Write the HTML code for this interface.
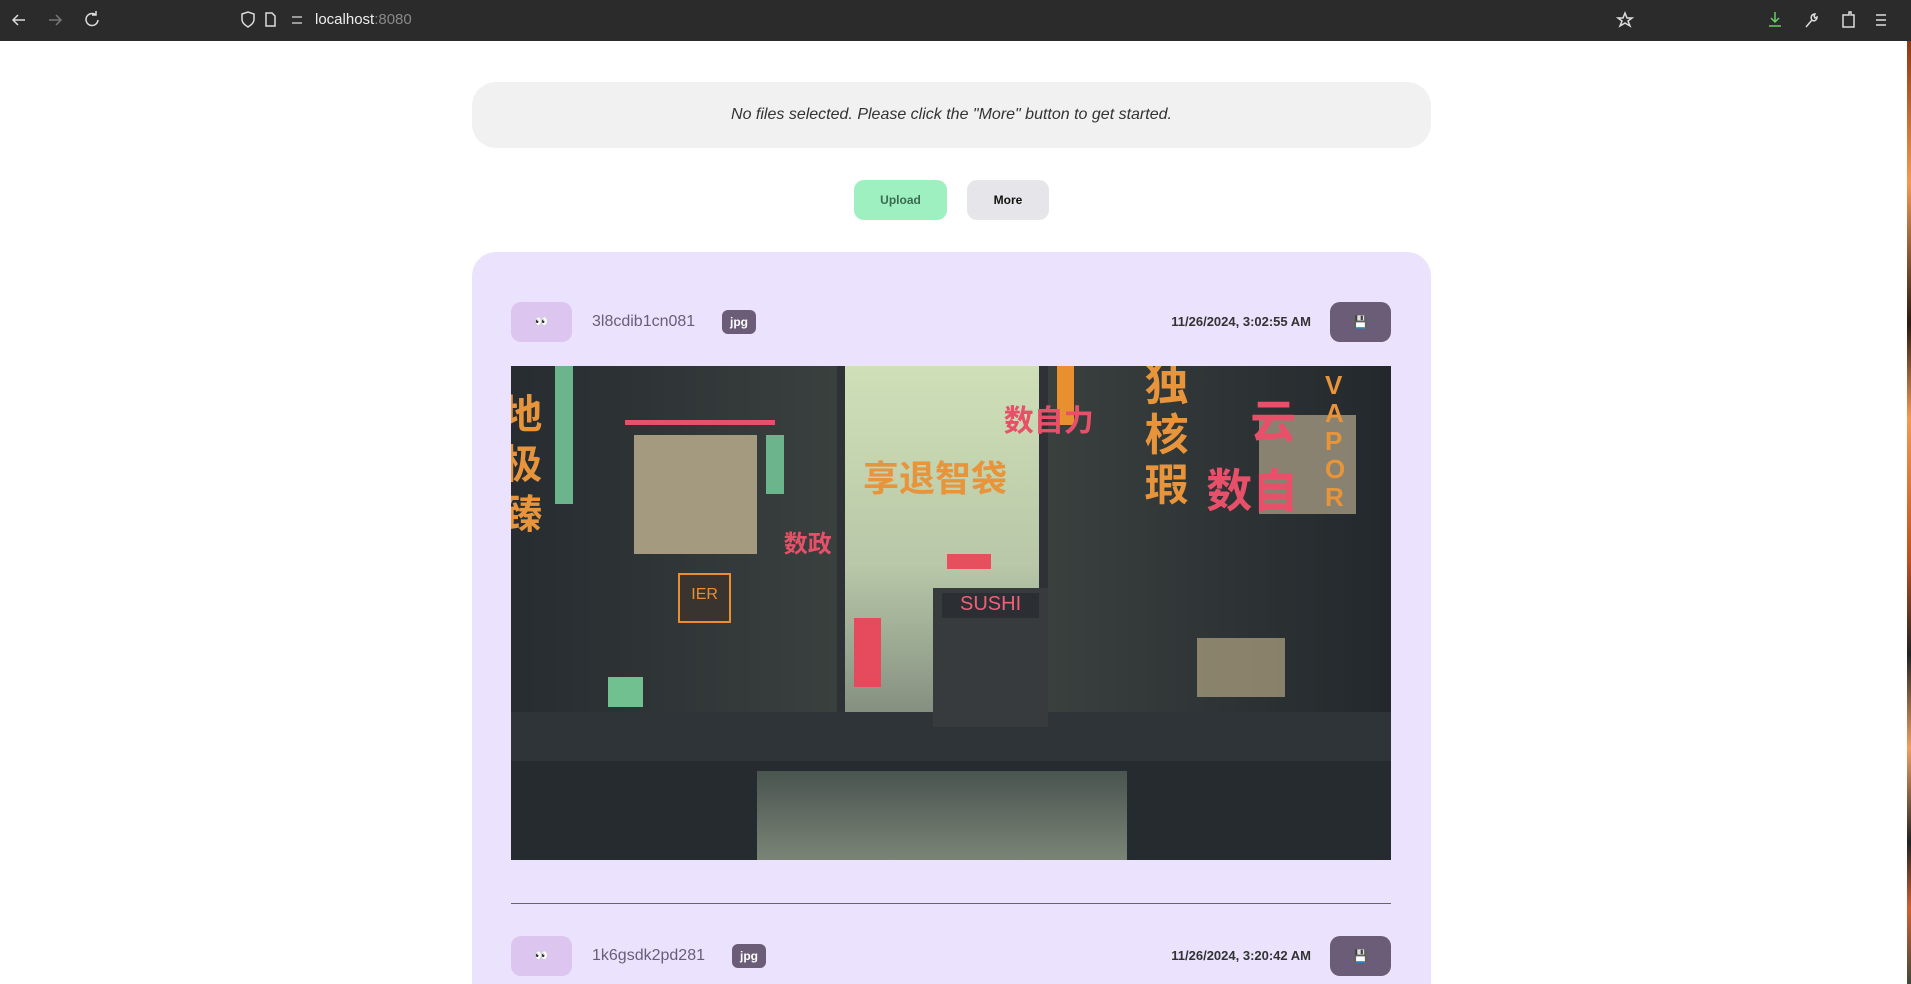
<!DOCTYPE html>
<html><head><meta charset="utf-8"><style>
*{box-sizing:border-box;margin:0;padding:0}
html,body{width:1911px;height:984px;overflow:hidden}
body{background:#fff;font-family:"Liberation Sans","Noto Sans CJK SC",sans-serif;position:relative}
.bar{position:absolute;left:0;top:0;width:1911px;height:41px;background:#2b2b2b;color:#ccc}
.strip{position:absolute;right:0;top:41px;width:4px;height:943px;background:linear-gradient(#8a3a10,#f39a55 15%,#2a1a10 30%,#f39a55 40%,#c05020 55%,#222 65%,#f0a060 75%,#222 85%,#d06030 92%,#404838)}
.info{position:absolute;left:472px;top:82px;width:959px;height:66px;border-radius:24px;background:#f1f1f1;text-align:center;line-height:66px;font-style:italic;font-size:16px;color:#333}
.btn{position:absolute;top:180px;height:40px;border-radius:10px;font-size:12px;font-weight:bold;text-align:center;line-height:40px}
.card{position:absolute;left:472px;top:252px;width:959px;height:732px;border-radius:24px 24px 0 0;background:#ebe3fe}
.eye{position:absolute;left:39px;width:61px;height:40px;border-radius:10px;background:#dcc5ee;text-align:center;line-height:40px;font-size:11px;color:#333}
.name{position:absolute;left:120px;font-size:16px;color:#6b5c78;line-height:40px}
.badge{position:absolute;height:24px;width:34px;border-radius:6px;background:#6b5c78;color:#fff;font-size:12px;font-weight:bold;text-align:center;line-height:24px}
.date{position:absolute;right:120px;font-size:13px;font-weight:bold;color:#333;line-height:40px}
.save{position:absolute;left:858px;width:61px;height:40px;border-radius:10px;background:#6b5c78;text-align:center;line-height:40px;font-size:12px}
.img{position:absolute;left:39px;top:114px;width:880px;height:494px;overflow:hidden;background:#2e3236}
.img div{position:absolute}
.cj{position:absolute;font-weight:bold;font-family:"Noto Sans CJK SC",sans-serif}
</style></head><body>
<div class="bar">
<svg width="1911" height="41" style="position:absolute;left:0;top:0" fill="none" stroke="#ddd" stroke-width="1.5">
<path d="M25 20H13M18 15l-5 5 5 5"/><path d="M49 20h12M56 15l5 5-5 5" stroke="#777"/>
<path d="M96 15a6 6 0 1 0 2 5M96 11v4h-4"/>
<path d="M242 14l6-2 6 2v5c0 4-3 6-6 8-3-2-6-4-6-8z"/><path d="M266 13h6l3 3v10h-9z"/>
<path d="M292 17h10M292 23h10" stroke-width="1.2"/>
<path d="M1625 13l2 5h5l-4 3 2 5-5-3-5 3 2-5-4-3h5z"/>
<path d="M1775 12v10M1771 18l4 4 4-4M1769 26h12" stroke="#6c6"/>
<path d="M1806 27l6-7M1812 20c2 2 5 0 5-3l-2 1-1-2 1-2c-3 0-5 3-3 6"/>
<path d="M1843 15h6v-3h2v3h3v12h-11z"/>
<path d="M1876 15h10M1876 20h10M1876 25h10"/>
</svg>
<div style="position:absolute;left:315px;top:11px;font-size:15px;color:#eee">localhost<span style="color:#888">:8080</span></div>
</div>
<div class="strip"></div>
<div class="info">No files selected. Please click the "More" button to get started.</div>
<div class="btn" style="left:854px;width:93px;background:#9ef0c0;color:#3a6a50">Upload</div>
<div class="btn" style="left:967px;width:82px;background:#e6e6ea;color:#111">More</div>
<div class="card">
<div style="position:absolute;left:0;top:50px;width:959px;height:40px">
<div class="eye">👀</div><div class="name">3l8cdib1cn081</div>
<div class="badge" style="left:250px;top:8px">jpg</div>
<div class="date">11/26/2024, 3:02:55 AM</div><div class="save">💾</div></div>
<div class="img">
<div style="left:38%;top:0;width:22%;height:100%;background:linear-gradient(#cfe0b8,#b8c8a8 40%,#8e9a88 65%,#4a504c)"></div>
<div style="left:0;top:0;width:37%;height:100%;background:linear-gradient(90deg,#262c30,#3a403e)"></div>
<div style="left:61%;top:0;width:39%;height:100%;background:linear-gradient(90deg,#3a403e,#23282d)"></div>
<div style="left:14%;top:14%;width:14%;height:24%;background:#a39a80"></div>
<div style="left:13%;top:11%;width:17%;height:1%;background:#e8506a"></div>
<div style="left:0;top:70%;width:100%;height:10%;background:#2e3438"></div>
<div style="left:0;top:80%;width:100%;height:20%;background:#262b2f"></div>
<div style="left:28%;top:82%;width:42%;height:18%;background:linear-gradient(#4a5450,#7a8476)"></div>
<div style="left:39%;top:51%;width:3%;height:14%;background:#e64b5d"></div>
<div style="left:48%;top:45%;width:13%;height:28%;background:#383b3e"></div>
<div style="left:49%;top:46%;width:11%;height:5%;background:#2b2e32;color:#f0607a;font-size:20px;text-align:center">SUSHI</div>
<div style="left:49.5%;top:38%;width:5%;height:3%;background:#e6505e"></div>
<div style="left:11%;top:63%;width:4%;height:6%;background:#70c090"></div>
<div style="left:5%;top:0;width:2%;height:28%;background:#6cb48c"></div>
<div style="left:29%;top:14%;width:2%;height:12%;background:#6cb48c"></div>
<div style="left:78%;top:55%;width:10%;height:12%;background:#c8b890;opacity:.6"></div>
<div style="left:85%;top:10%;width:11%;height:20%;background:#8a8270"></div>
<div style="left:62%;top:0;width:2%;height:12%;background:#e89030"></div>
<div style="left:19%;top:42%;width:6%;height:10%;border:2px solid #e89030;background:#3a3430;color:#e89030;font-size:16px;line-height:40px;text-align:center">IER</div>
<div class="cj" style="left:56%;top:6%;font-size:30px;color:#e8506a">数自力</div>
<div class="cj" style="left:40%;top:17%;font-size:36px;color:#e8943a">享退智袋</div>
<div class="cj" style="left:72%;top:-2%;font-size:44px;line-height:50px;color:#e8943a;width:50px">独<br>核<br>瑕</div>
<div class="cj" style="left:79%;top:18%;font-size:46px;color:#e8506a">数自</div>
<div class="cj" style="left:84%;top:4%;font-size:46px;color:#e8506a">云</div>
<div class="cj" style="left:92.5%;top:1%;font-size:26px;line-height:28px;color:#e8943a;width:26px;font-family:'Liberation Sans'">V<br>A<br>P<br>O<br>R</div>
<div class="cj" style="left:-1%;top:4%;font-size:40px;line-height:50px;color:#e8943a;width:30px">地<br>极<br>臻</div>
<div class="cj" style="left:31%;top:32%;font-size:24px;color:#e8506a">数政</div>
</div>
<div style="position:absolute;left:39px;top:651px;width:880px;height:1px;background:#666"></div>
<div style="position:absolute;left:0;top:684px;width:959px;height:40px">
<div class="eye">👀</div><div class="name">1k6gsdk2pd281</div>
<div class="badge" style="left:260px;top:8px">jpg</div>
<div class="date">11/26/2024, 3:20:42 AM</div><div class="save">💾</div></div>
</div>
</body></html>
